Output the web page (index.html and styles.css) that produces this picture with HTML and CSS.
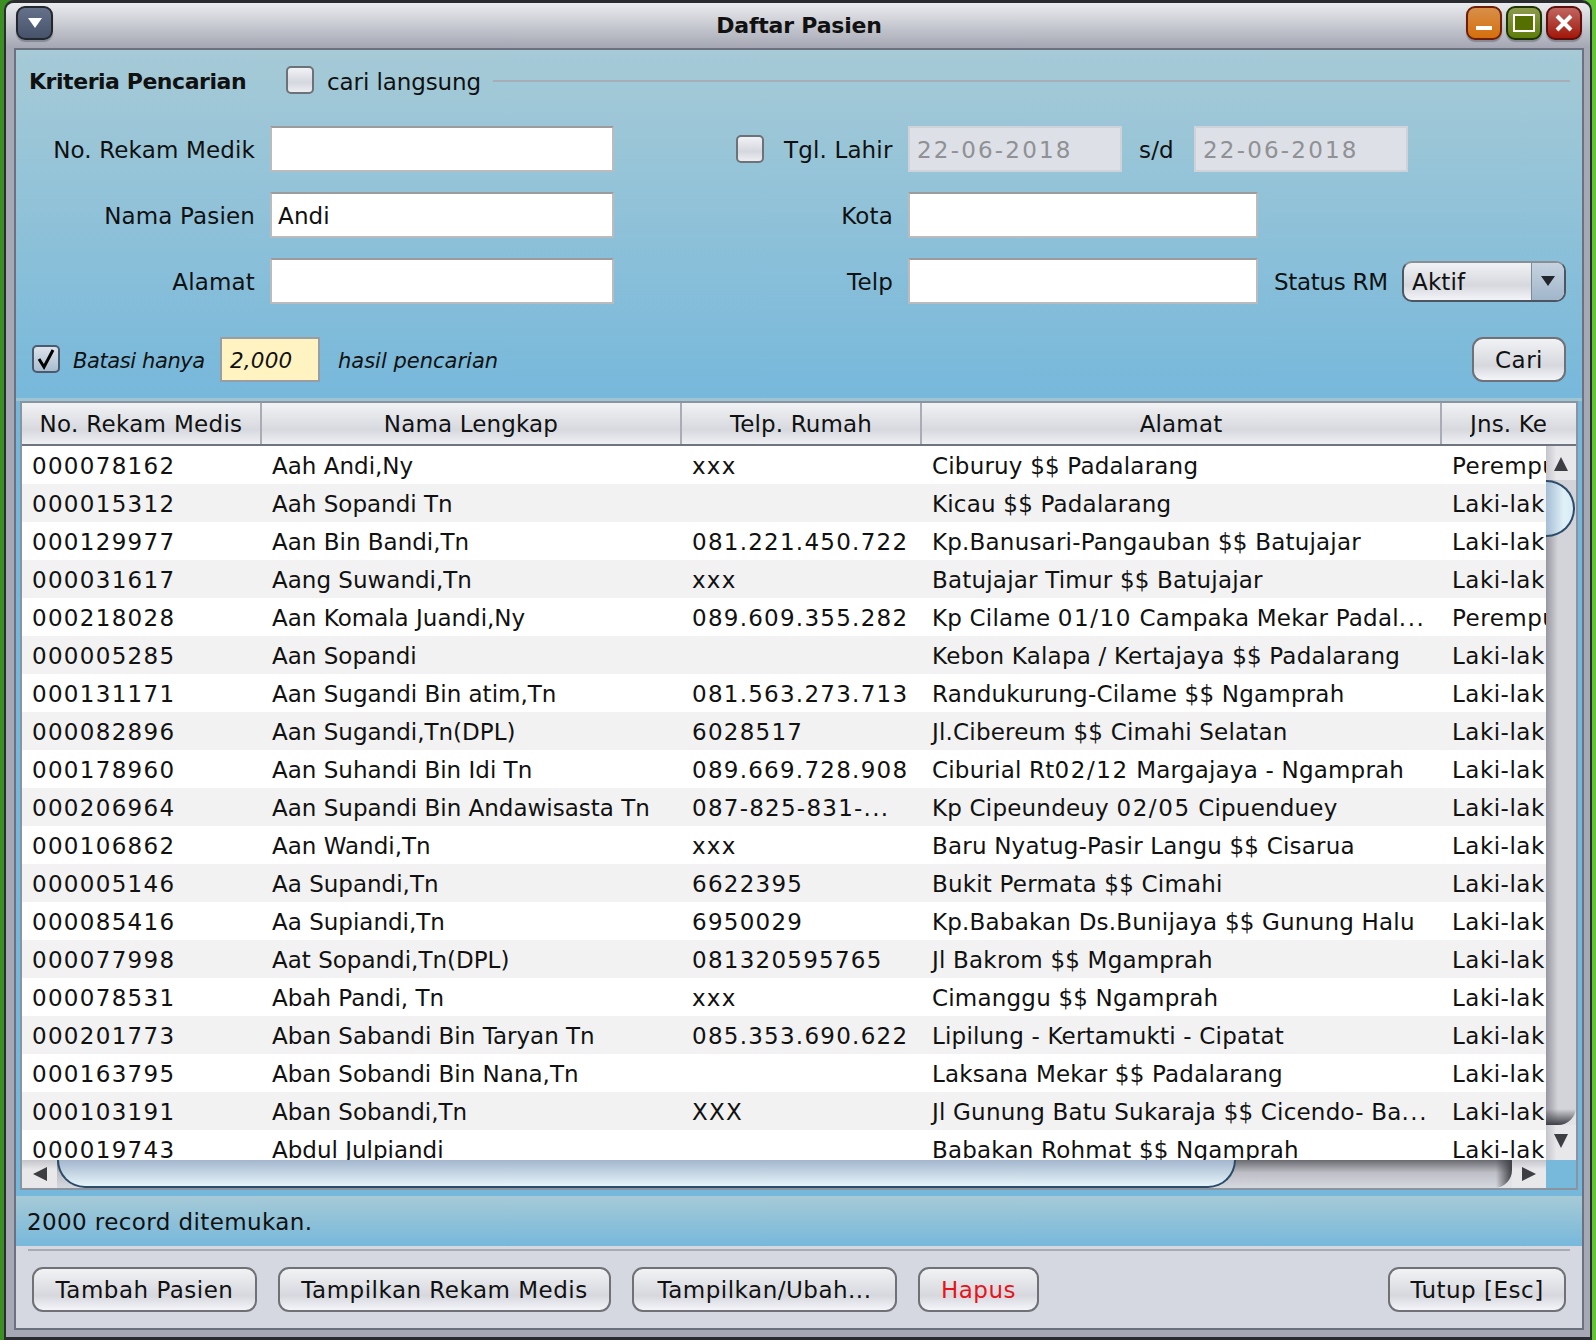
FILE: index.html
```html
<!DOCTYPE html>
<html lang="en">

<head>
    <meta charset="UTF-8" />
    <title>Daftar Pasien</title>
    <link rel="stylesheet" href="styles.css">
</head>

<body>
    <div class="window">
        <div class="titlebar">
            <button class="win-btn win-menu">
                <svg width="16" height="12" viewBox="0 0 16 12"><path d="M1 1h14L8 11z" fill="#fff" /></svg>
            </button>
            <div class="win-title">Daftar Pasien</div>
            <div class="win-actions">
                <button class="win-btn win-min">
                    <svg width="20" height="20" viewBox="0 0 20 20"><rect x="2" y="13" width="16" height="4" fill="#fff" /></svg>
                </button>
                <button class="win-btn win-max">
                    <svg width="24" height="22" viewBox="0 0 24 22"><rect x="2" y="3" width="20" height="16" fill="#567000" stroke="#fff" stroke-width="2" /></svg>
                </button>
                <button class="win-btn win-close">
                    <svg width="22" height="22" viewBox="0 0 22 22"><path d="M4 4l14 14M18 4L4 18" stroke="#fff" stroke-width="4" /></svg>
                </button>
            </div>
        </div>

        <div class="content">
            <section class="search">
                <div class="search-head">
                    <span class="search-title">Kriteria Pencarian</span>
                    <span class="check"></span>
                    <span class="check-label">cari langsung</span>
                    <span class="search-rule"></span>
                </div>

                <div class="form-row">
                    <label class="lbl lbl-left">No. Rekam Medik</label>
                    <span class="field field-left"></span>
                    <span class="check check-tgl"></span>
                    <label class="lbl-tgl">Tgl. Lahir</label>
                    <span class="field field-date">22-06-2018</span>
                    <label class="lbl-sd">s/d</label>
                    <span class="field field-date">22-06-2018</span>
                </div>
                <div class="form-row">
                    <label class="lbl lbl-left">Nama Pasien</label>
                    <span class="field field-left">Andi</span>
                    <label class="lbl lbl-right">Kota</label>
                    <span class="field field-right"></span>
                </div>
                <div class="form-row">
                    <label class="lbl lbl-left">Alamat</label>
                    <span class="field field-left"></span>
                    <label class="lbl lbl-right">Telp</label>
                    <span class="field field-right"></span>
                    <label class="lbl-status">Status RM</label>
                    <div class="combo">
                        <span class="combo-value">Aktif</span>
                        <span class="combo-arrow">
                            <svg width="16" height="12" viewBox="0 0 16 12"><path d="M1 1h14L8 11z" fill="#22262c" /></svg>
                        </span>
                    </div>
                </div>

                <div class="limit-row">
                    <span class="check check-on">
                        <svg width="24" height="24" viewBox="0 0 24 24"><path d="M5 12l5 8L19 3" fill="none" stroke="#000" stroke-width="3" /></svg>
                    </span>
                    <span class="limit-text limit-a">Batasi hanya</span>
                    <span class="limit-input">2,000</span>
                    <span class="limit-text limit-b">hasil pencarian</span>
                    <button class="btn btn-cari">Cari</button>
                </div>
            </section>

            <section class="results">
                <div class="grid">
                    <div class="grid-head">
                        <div class="hcell hc1">No. Rekam Medis</div>
                        <div class="hcell hc2">Nama Lengkap</div>
                        <div class="hcell hc3">Telp. Rumah</div>
                        <div class="hcell hc4">Alamat</div>
                        <div class="hcell hc5"><span>Jns. Kelamin</span></div>
                    </div>
                    <div class="grid-body">
                        <div class="rows">
                            <table>
                                <tr><td>000078162</td><td>Aah Andi,Ny</td><td>xxx</td><td>Ciburuy $$ Padalarang</td><td>Perempuan</td></tr>
                                <tr><td>000015312</td><td>Aah Sopandi Tn</td><td></td><td>Kicau $$ Padalarang</td><td>Laki-laki</td></tr>
                                <tr><td>000129977</td><td>Aan Bin Bandi,Tn</td><td>081.221.450.722</td><td>Kp.Banusari-Pangauban $$ Batujajar</td><td>Laki-laki</td></tr>
                                <tr><td>000031617</td><td>Aang Suwandi,Tn</td><td>xxx</td><td>Batujajar Timur $$ Batujajar</td><td>Laki-laki</td></tr>
                                <tr><td>000218028</td><td>Aan Komala Juandi,Ny</td><td>089.609.355.282</td><td>Kp Cilame <span class="num">01/10</span> Campaka Mekar Padal<span class="num">...</span></td><td>Perempuan</td></tr>
                                <tr><td>000005285</td><td>Aan Sopandi</td><td></td><td>Kebon Kalapa / Kertajaya $$ Padalarang</td><td>Laki-laki</td></tr>
                                <tr><td>000131171</td><td>Aan Sugandi Bin atim,Tn</td><td>081.563.273.713</td><td>Randukurung-Cilame $$ Ngamprah</td><td>Laki-laki</td></tr>
                                <tr><td>000082896</td><td>Aan Sugandi,Tn(DPL)</td><td>6028517</td><td>Jl.Cibereum $$ Cimahi Selatan</td><td>Laki-laki</td></tr>
                                <tr><td>000178960</td><td>Aan Suhandi Bin Idi Tn</td><td>089.669.728.908</td><td>Ciburial Rt<span class="num">02/12</span> Margajaya - Ngamprah</td><td>Laki-laki</td></tr>
                                <tr><td>000206964</td><td>Aan Supandi Bin Andawisasta Tn</td><td>087-825-831-...</td><td>Kp Cipeundeuy <span class="num">02/05</span> Cipuenduey</td><td>Laki-laki</td></tr>
                                <tr><td>000106862</td><td>Aan Wandi,Tn</td><td>xxx</td><td>Baru Nyatug-Pasir Langu $$ Cisarua</td><td>Laki-laki</td></tr>
                                <tr><td>000005146</td><td>Aa Supandi,Tn</td><td>6622395</td><td>Bukit Permata $$ Cimahi</td><td>Laki-laki</td></tr>
                                <tr><td>000085416</td><td>Aa Supiandi,Tn</td><td>6950029</td><td>Kp.Babakan Ds.Bunijaya $$ Gunung Halu</td><td>Laki-laki</td></tr>
                                <tr><td>000077998</td><td>Aat Sopandi,Tn(DPL)</td><td>081320595765</td><td>Jl Bakrom $$ Mgamprah</td><td>Laki-laki</td></tr>
                                <tr><td>000078531</td><td>Abah Pandi, Tn</td><td>xxx</td><td>Cimanggu $$ Ngamprah</td><td>Laki-laki</td></tr>
                                <tr><td>000201773</td><td>Aban Sabandi Bin Taryan Tn</td><td>085.353.690.622</td><td>Lipilung - Kertamukti - Cipatat</td><td>Laki-laki</td></tr>
                                <tr><td>000163795</td><td>Aban Sobandi Bin Nana,Tn</td><td></td><td>Laksana Mekar $$ Padalarang</td><td>Laki-laki</td></tr>
                                <tr><td>000103191</td><td>Aban Sobandi,Tn</td><td>XXX</td><td>Jl Gunung Batu Sukaraja $$ Cicendo- Ba<span class="num">...</span></td><td>Laki-laki</td></tr>
                                <tr><td>000019743</td><td>Abdul Julpiandi</td><td></td><td>Babakan Rohmat $$ Ngamprah</td><td>Laki-laki</td></tr>
                            </table>
                        </div>
                        <div class="vbar">
                            <div class="vbar-btn vbar-up">
                                <svg width="16" height="16" viewBox="0 0 16 16"><path d="M8 1l7 14H1z" fill="#3c3e44" /></svg>
                            </div>
                            <div class="vbar-track">
                                <div class="vbar-fill"></div>
                                <div class="vbar-thumb"></div>
                            </div>
                            <div class="vbar-btn vbar-down">
                                <svg width="16" height="16" viewBox="0 0 16 16"><path d="M8 15L1 1h14z" fill="#3c3e44" /></svg>
                            </div>
                        </div>
                    </div>
                    <div class="hbar">
                        <div class="hbar-main">
                            <div class="hbar-left">
                                <svg width="16" height="16" viewBox="0 0 16 16"><path d="M1 8l14-7v14z" fill="#3c3e44" /></svg>
                            </div>
                            <div class="hbar-track">
                                <div class="hbar-fill"></div>
                                <div class="hbar-thumb"></div>
                            </div>
                            <div class="hbar-right">
                                <svg width="16" height="16" viewBox="0 0 16 16"><path d="M15 8L1 1v14z" fill="#3c3e44" /></svg>
                            </div>
                        </div>
                        <div class="hbar-corner"></div>
                    </div>
                </div>
            </section>

            <div class="status">2000 record ditemukan.</div>

            <div class="actions">
                <div class="actions-rule"></div>
                <div class="actions-row">
                    <button class="btn btn-tambah">Tambah Pasien</button>
                    <button class="btn btn-rekam">Tampilkan Rekam Medis</button>
                    <button class="btn btn-ubah">Tampilkan/Ubah...</button>
                    <button class="btn btn-hapus">Hapus</button>
                    <button class="btn btn-tutup">Tutup [Esc]</button>
                </div>
            </div>
        </div>
    </div>
</body>

</html>
```

FILE: styles.css
```css
* {
    box-sizing: border-box;
}

html,
body {
    margin: 0;
    height: 1340px;
    overflow: hidden;
}

body {
    width: 1596px;
    padding: 0 4px;
    background: linear-gradient(90deg, #3c8f22 0, #4da82a 50%, #63c435 100%);
    font-family: "DejaVu Sans", sans-serif;
    font-size: 23px;
    letter-spacing: 0.15px;
    color: #111;
}

button {
    font: inherit;
    padding: 0;
}

.window {
    display: flex;
    flex-direction: column;
    width: 1588px;
    height: 1340px;
    padding: 0 6px 7px 8px;
    background: #a6a9b5;
    border: 2px solid #2a2c30;
    border-top-width: 3px;
    border-radius: 10px 10px 0 0;
    border-bottom-width: 3px;
}

.titlebar {
    display: flex;
    align-items: center;
    position: relative;
    height: 45px;
    flex: none;
    margin: 0 -6px 0 -8px;
    padding: 0 8px 6px 10px;
    background: linear-gradient(#ebecef, #a4a7b3);
    border-radius: 8px 8px 0 0;
}

.win-title {
    position: absolute;
    left: 0;
    right: 0;
    top: 10px;
    padding-left: 2px;
    text-align: center;
    font-weight: bold;
    font-size: 22px;
    letter-spacing: -0.2px;
}

.win-actions {
    display: flex;
    gap: 4px;
    margin-left: auto;
}

.win-btn {
    display: flex;
    align-items: center;
    justify-content: center;
    width: 36px;
    height: 34px;
    border-radius: 9px;
    border: 2px solid #333;
    box-shadow: 0 2px 1px rgba(90, 95, 110, 0.5);
}

.win-menu {
    width: 37px;
    background: linear-gradient(#65718a, #47536a);
    border-color: #23282f;
}

.win-min {
    background: linear-gradient(#d88f4a, #d56f0d);
    border-color: #6d1e06;
}

.win-max {
    background: linear-gradient(#8d9b4d, #5f7d0a);
    border-color: #1f3300;
}

.win-close {
    background: linear-gradient(#bf6660, #a2170a);
    border-color: #5c0f0c;
}

.content {
    display: flex;
    flex-direction: column;
    flex: 1;
    border: 2px solid #6c7180;
    background: #76b8db;
    min-height: 0;
}

/* panel pencarian */
.search {
    height: 348px;
    flex: none;
    padding-top: 16px;
    background: linear-gradient(#a6cad6, #77b8db);
}

.search-head {
    display: flex;
    align-items: center;
    height: 28px;
    padding-left: 13px;
}

.search-title {
    width: 257px;
    padding-top: 3px;
    font-weight: bold;
    font-size: 22px;
    letter-spacing: -0.45px;
}

.check {
    display: flex;
    align-items: center;
    justify-content: center;
    flex: none;
    width: 28px;
    height: 28px;
    border: 2px solid #6d7178;
    border-radius: 5px;
    background: linear-gradient(#f1f2f5, #d5d7df 60%, #eceef2);
}

.check-on {
    border-color: #4a5a6f;
    background: linear-gradient(#dde3ea, #a9bccf);
}

.check-label {
    margin-left: 13px;
    padding-top: 3px;
    letter-spacing: -0.1px;
}

.search-rule {
    flex: 1;
    height: 2px;
    margin: 2px 12px 0;
    background: #a8aeb9;
}

.form-row {
    display: flex;
    align-items: center;
    height: 46px;
    margin-top: 20px;
}

.search-head + .form-row {
    margin-top: 32px;
}

.form-row label {
    padding-top: 1px;
    white-space: nowrap;
}

.lbl {
    text-align: right;
}

.lbl-left {
    width: 239px;
}

.lbl-right {
    width: 279px;
}

.field {
    display: block;
    flex: none;
    height: 46px;
    line-height: 44px;
    padding: 0 6px;
    background: #fff;
    border: 2px solid #b9bbbd;
    border-top-color: #9c9c9c;
}

.field-left {
    width: 344px;
    margin-left: 15px;
}

.field-right {
    width: 350px;
    margin-left: 15px;
}

.field-date {
    width: 214px;
    padding-left: 7px;
    letter-spacing: 2.2px;
    color: #8f9194;
    background: #dde0e6;
    border-color: #cfd2d8;
}

.check-tgl {
    margin-left: 122px;
}

.lbl-tgl {
    width: 144px;
    padding-left: 20px;
}

.lbl-sd {
    width: 72px;
    padding-left: 17px;
}

.lbl-status {
    margin-left: 16px;
    width: 128px;
    letter-spacing: -0.3px;
}

.combo {
    display: flex;
    width: 164px;
    height: 41px;
    border: 2px solid #4d5560;
    border-top-color: #8a8f96;
    border-radius: 10px;
    overflow: hidden;
    background: linear-gradient(#f1f2f4, #d6d8de 60%, #f3f4f8);
}

.combo-value {
    flex: 1;
    padding-left: 8px;
    line-height: 38px;
}

.combo-arrow {
    display: flex;
    align-items: center;
    justify-content: center;
    width: 33px;
    border-left: 1px solid #7c8a99;
    background: linear-gradient(#c6d3df, #a1b6cb);
}

.limit-row {
    display: flex;
    align-items: center;
    height: 46px;
    margin-top: 32px;
    padding-left: 16px;
}

.limit-text {
    padding-top: 3px;
    font-style: italic;
    font-size: 21px;
}

.limit-a {
    width: 160px;
    padding-left: 13px;
    letter-spacing: -0.4px;
}

.limit-input {
    width: 100px;
    height: 45px;
    line-height: 43px;
    padding-left: 8px;
    font-style: italic;
    font-size: 21.5px;
    background: #fff3c2;
    border: 2px solid #9a9ea3;
}

.limit-b {
    margin-left: 18px;
    letter-spacing: 0;
}

.btn {
    height: 45px;
    padding-top: 1px;
    border: 2px solid #6f7176;
    border-radius: 11px;
    letter-spacing: 0.5px;
    color: #111;
    background: linear-gradient(#f1f2f4, #d6d8de 65%, #f4f5f9);
}

.btn-cari {
    width: 94px;
    margin-left: auto;
    margin-right: 16px;
}

/* tabel hasil */
.results {
    flex: none;
    height: 798px;
    padding: 3px 4px 6px;
    background: linear-gradient(#9ec5d3 3px, #76b8db 3px);
}

.grid {
    display: flex;
    flex-direction: column;
    height: 100%;
    border: 2px solid #8b939f;
}

.grid-head {
    display: flex;
    flex: none;
    height: 43px;
    border-bottom: 2px solid #70747f;
    background: linear-gradient(#f1f2f4, #d7d9df 65%, #eef0f3);
}

.hcell {
    line-height: 43px;
    text-align: center;
    border-right: 2px solid #a9acb5;
    white-space: nowrap;
}

.hc1 {
    width: 240px;
    letter-spacing: 0.3px;
}

.hc2 {
    width: 420px;
}

.hc3 {
    width: 240px;
}

.hc4 {
    width: 520px;
}

.hc5 {
    flex: 1;
    border-right: 0;
    text-align: left;
    padding-left: 28px;
}

.hc5 span {
    display: block;
    width: 76px;
    overflow: hidden;
}

.grid-body {
    display: flex;
    flex: none;
    height: 714px;
}

.rows {
    width: 1524px;
    overflow: hidden;
}

.rows table {
    width: 1524px;
    border-collapse: collapse;
    table-layout: fixed;
}

.rows tr {
    height: 38px;
    background: #fff;
}

.rows tr:nth-child(even) {
    background: #f2f2f2;
}

.rows td {
    padding: 2px 0 0 11px;
    white-space: nowrap;
    overflow: hidden;
}

.rows td:nth-child(1) {
    width: 239px;
    padding-left: 10px;
    letter-spacing: 1.3px;
}

.rows td:nth-child(2) {
    width: 420px;
    letter-spacing: 0;
}

.rows td:nth-child(3) {
    width: 240px;
    letter-spacing: 1.25px;
}

.rows td:nth-child(4) {
    width: 520px;
    letter-spacing: 0.2px;
}

.rows td:nth-child(5) {
    letter-spacing: 0.5px;
}

.rows .num {
    letter-spacing: 1.6px;
}

.vbar {
    display: flex;
    flex-direction: column;
    width: 30px;
}

.vbar-btn {
    display: flex;
    justify-content: center;
    flex: none;
    background: linear-gradient(90deg, #c4c5cb, #e8e8eb 35%);
}

.vbar-up {
    height: 34px;
    padding-top: 10px;
}

.vbar-down {
    height: 35px;
    padding-top: 8px;
}

.vbar-track {
    position: relative;
    flex: 1;
    background: #e2e3e7;
}

.vbar-fill {
    height: 100%;
    border-radius: 0 0 18px 0;
    background:
        linear-gradient(rgba(50, 50, 55, 0) calc(100% - 16px), #3f4045),
        linear-gradient(90deg, #97989f, #d3d4da 40%);
}

.vbar-thumb {
    position: absolute;
    left: 0;
    top: 0;
    width: 29px;
    height: 57px;
    border: 2px solid #2b4b69;
    border-left: 0;
    border-radius: 0 29px 29px 0;
    background: linear-gradient(90deg, #a5bdd4, #c4d8e6 35%, #e0f0f7 65%, #d7ecf6);
}

.hbar {
    display: flex;
    flex: none;
    height: 28px;
}

.hbar-main {
    display: flex;
    width: 1524px;
}

.hbar-left {
    display: flex;
    align-items: center;
    flex: none;
    width: 35px;
    padding-left: 10px;
    background: linear-gradient(#c4c5cb, #e8e8eb 35%);
}

.hbar-right {
    display: flex;
    align-items: center;
    flex: none;
    width: 34px;
    padding-left: 9px;
    background: linear-gradient(#c4c5cb, #e8e8eb 35%);
}

.hbar-track {
    position: relative;
    flex: 1;
    background: #e2e3e7;
}

.hbar-fill {
    height: 100%;
    border-radius: 0 0 18px 0;
    background:
        linear-gradient(90deg, rgba(50, 50, 55, 0) calc(100% - 16px), #3f4045),
        linear-gradient(#6a6b70, #bdbec5 45%, #d6d8e0);
}

.hbar-thumb {
    position: absolute;
    left: 0;
    top: 0;
    width: 1179px;
    height: 28px;
    border: 2px solid #2b4b69;
    border-top: 0;
    border-radius: 0 0 28px 28px;
    background: linear-gradient(#a3b6cd, #e6f4fa);
}

.hbar-corner {
    flex: 1;
    background: #77b9db;
}

.status {
    flex: none;
    height: 50px;
    line-height: 52px;
    padding-left: 11px;
    letter-spacing: 0.4px;
    background: linear-gradient(#a6cad6, #77b8db);
}

.actions {
    flex: 1;
    background: #d5d8e1;
    padding: 3px 12px 0;
}

.actions-rule {
    height: 2px;
    background: #a8abb4;
}

.actions-row {
    display: flex;
    margin-top: 16px;
    padding: 0 4px;
}

.btn-tambah {
    width: 225px;
}

.btn-rekam {
    width: 333px;
    margin-left: 21px;
}

.btn-ubah {
    width: 265px;
    margin-left: 21px;
}

.btn-hapus {
    width: 121px;
    margin-left: 21px;
    color: #e8141a;
}

.btn-tutup {
    width: 178px;
    margin-left: auto;
}
```
